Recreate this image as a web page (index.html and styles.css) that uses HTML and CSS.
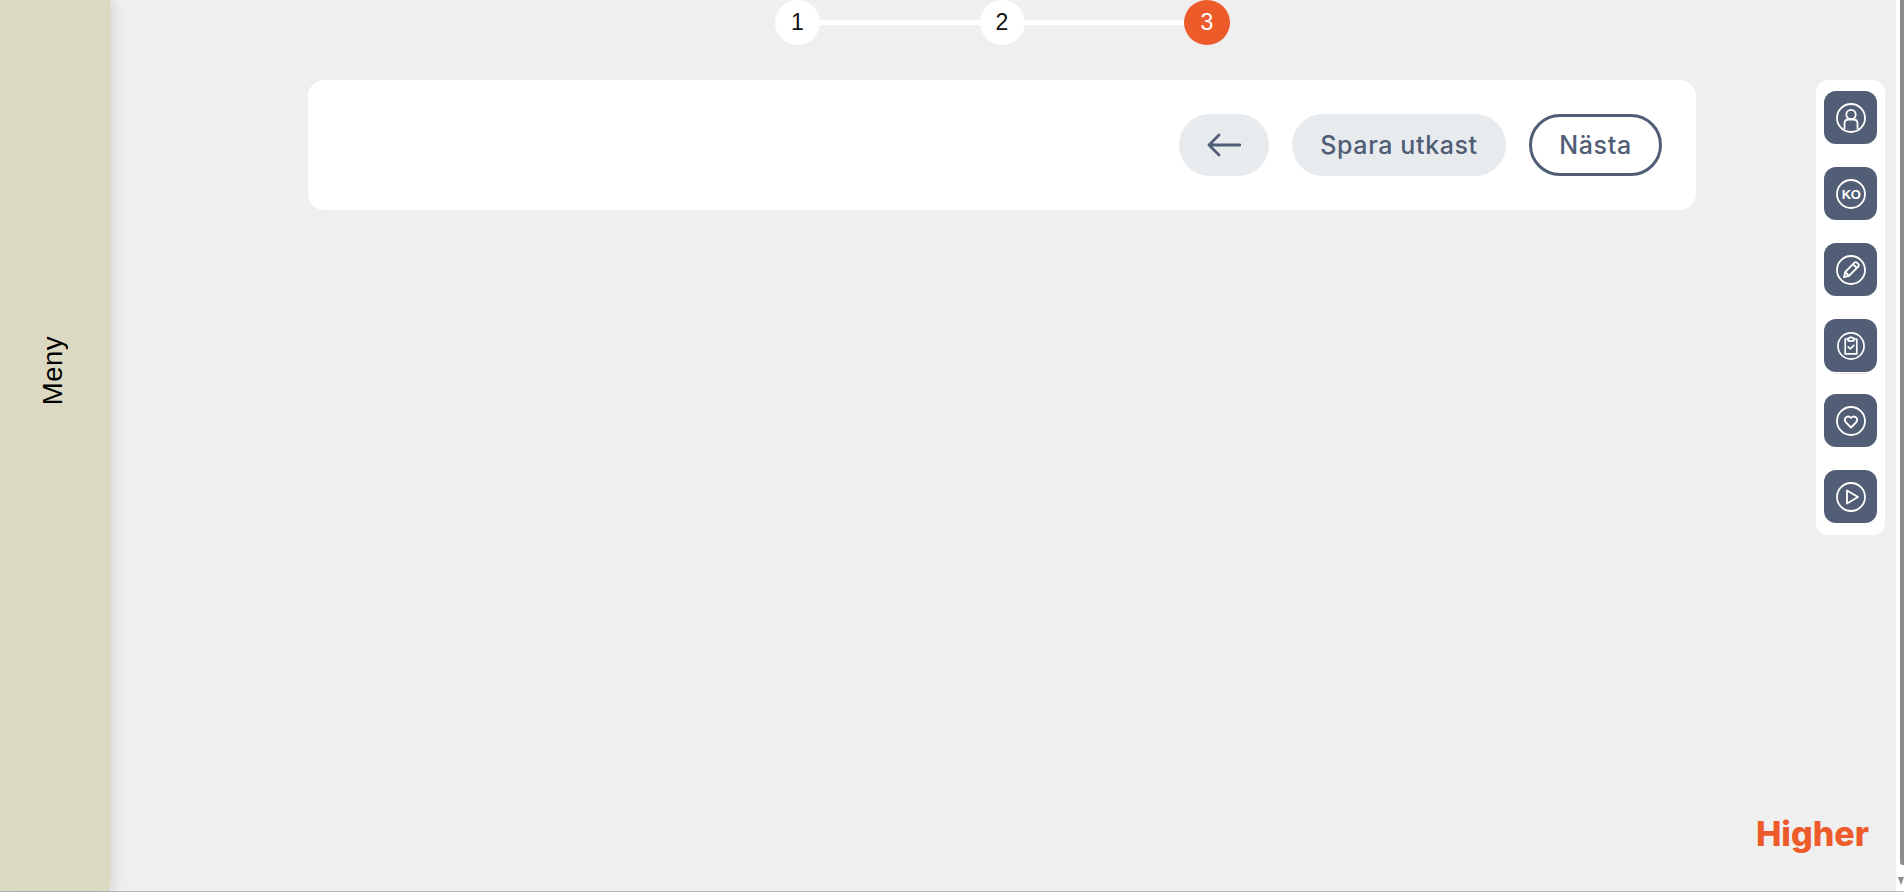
FILE: index.html
```html
<!DOCTYPE html>
<html lang="sv">
<head>
	<meta charset="UTF-8">
	<title>Higher</title>
	<link rel="stylesheet" href="styles.css">
</head>
<body>
	<div class="page">
		<aside class="sidebar"><span class="sidebar-label">Meny</span></aside>

		<main class="main">
			<div class="top">
				<div class="content">
					<ol class="steps">
						<li class="step">1</li>
						<li class="step-line"></li>
						<li class="step">2</li>
						<li class="step-line"></li>
						<li class="step step-current">3</li>
					</ol>
					<div class="card">
						<button class="btn btn-back" aria-label="Tillbaka">
							<svg class="arrow" viewBox="0 0 34 24"><path d="M33 12H2M12 2 2 12l10 10"/></svg>
						</button>
						<button class="btn btn-save">Spara utkast</button>
						<button class="btn btn-next">Nästa</button>
					</div>
				</div>

				<nav class="rail">
					<a class="rail-btn">
						<svg class="icon" viewBox="0 0 30 30"><circle cx="15" cy="15" r="14"/><circle cx="15" cy="11.500" r="4.700"/><path d="M8.500 25.500V20.500q0-4 4-4h5q4 0 4 4v5"/></svg>
					</a>
					<a class="rail-btn">
						<svg class="icon" viewBox="0 0 30 30"><circle cx="15" cy="15" r="14"/><text class="icon-text" x="15" y="19.500" text-anchor="middle">KO</text></svg>
					</a>
					<a class="rail-btn">
						<svg class="icon" viewBox="0 0 30 30"><circle cx="15" cy="15" r="14"/><path d="M8 22l1.200-5L18.500 7.700q1.200-1.200 2.400 0l1.400 1.400q1.200 1.200 0 2.400L13 20.800zM9.200 17l3.800 3.800M17 9.200l3.800 3.800"/></svg>
					</a>
					<a class="rail-btn rail-btn-ruled">
						<svg class="icon icon-small" viewBox="0 0 30 30"><circle cx="15" cy="15" r="14"/><path d="M12 7.500H8.800v16h12.400v-16H18M12 6.500h1.500q1.500-2 3 0H18v3h-6zM12 16l2.200 2 3.800-3.600"/></svg>
					</a>
					<a class="rail-btn">
						<svg class="icon" viewBox="0 0 30 30"><circle cx="15" cy="15" r="14"/><path d="M15 21.500l-5-5q-2-2.400-.6-4.600 2.600-2.800 5.600 0 3-2.800 5.600 0 1.400 2.200-.6 4.600z"/></svg>
					</a>
					<a class="rail-btn">
						<svg class="icon" viewBox="0 0 30 30"><circle cx="15" cy="15" r="14"/><path d="M11 8.500v13L22 15z"/></svg>
					</a>
				</nav>
			</div>

			<div class="brand">Higher</div>
		</main>

		<div class="scrollbar">
			<div class="scroll-thumb"></div>
			<div class="scroll-arrow"></div>
		</div>
	</div>
</body>
</html>
```

FILE: styles.css
```css
* { box-sizing: border-box; }
html, body { margin: 0; padding: 0; height: 100%; overflow: hidden; }
body { background-color: #efefef; font-family: "Liberation Sans", Arial, sans-serif; }

.page { display: flex; height: 892px; border-bottom: 1px solid #b9b9b9; }

/* left menu */
.sidebar { flex: 0 0 110px; padding: 336px 0 0 37px; background-color: #dbd9c1; box-shadow: 0 0 14px rgba(0,0,0,.18); }
.sidebar-label { display: block; writing-mode: vertical-rl; transform: rotate(180deg); font-size: 27.500px; line-height: 32px; letter-spacing: .5px; color: #000; }

.main { flex: 1; display: flex; flex-direction: column; justify-content: space-between; min-width: 0; }
.top { display: flex; }
.content { flex: 0 0 1388px; margin-left: 198px; }

/* steps */
.steps { display: flex; align-items: center; width: 455px; margin: 0 0 35px 467px; padding: 0; list-style: none; }
.step { flex: 0 0 45px; height: 45px; border-radius: 50%; background-color: #fff; color: #111; font-size: 23px; line-height: 45px; text-align: center; }
.step-line { flex: 1; height: 5px; background-color: #fff; }
.step-current { flex-basis: 46px; background-color: #ed5b2b; color: #fff; }

/* action card */
.card { display: flex; justify-content: flex-end; align-items: center; gap: 23px; height: 130px; padding-right: 34px; background-color: #fff; border-radius: 16px; }
.btn { height: 62px; padding: 0; border: 0; border-radius: 31px; background-color: #e8ebee; color: #4f5d75; font-family: Inter, sans-serif; font-size: 25px; font-weight: 500; letter-spacing: .6px; }
.btn-back { display: flex; align-items: center; width: 90px; padding-left: 28px; }
.btn-save { width: 214px; }
.btn-next { width: 133px; background-color: #fff; border: 3px solid #4f5d75; }
.arrow { width: 34px; height: 24px; fill: none; stroke: #4f5d75; stroke-width: 2.800; stroke-linecap: round; stroke-linejoin: round; }

/* right rail */
.rail { flex: 0 0 69px; display: flex; flex-direction: column; gap: 23px; height: 455px; margin: 80px 0 0 120px; padding: 11px 8px 0; background-color: #fff; border-radius: 12px; }
.rail-btn { position: relative; display: flex; align-items: center; justify-content: center; flex: 0 0 53px; border-radius: 12px; background-color: #515e76; }
.rail-btn-ruled { margin-bottom: -1px; }
.rail-btn-ruled::after { content: ""; position: absolute; left: 10px; right: 10px; bottom: -2px; height: 1px; background-color: #eee7df; }
.icon { width: 30px; height: 30px; fill: none; stroke: #fff; stroke-width: 1.800; stroke-linejoin: round; stroke-linecap: round; }
.icon-small { width: 28px; height: 28px; }
.icon-text { fill: #fff; stroke: none; font-family: "Liberation Sans", sans-serif; font-weight: 700; font-size: 13px; letter-spacing: -.5px; }

.brand { align-self: flex-end; margin: 0 27px 37px 0; color: #ed5b2b; font-family: Inter, sans-serif; font-weight: 800; font-size: 34px; line-height: 40px; }

/* scrollbar strip */
.scrollbar { flex: 0 0 8px; display: flex; flex-direction: column; align-items: flex-end; background-color: #fff; }
.scroll-thumb { width: 4px; height: 865px; background-color: #8c8c8c; border-radius: 0 0 0 3px; }
.scroll-arrow { width: 0; height: 0; margin-top: 12px; border-style: solid; border-width: 8px 3px 0 3px; border-color: #8c8c8c transparent transparent transparent; }
```
